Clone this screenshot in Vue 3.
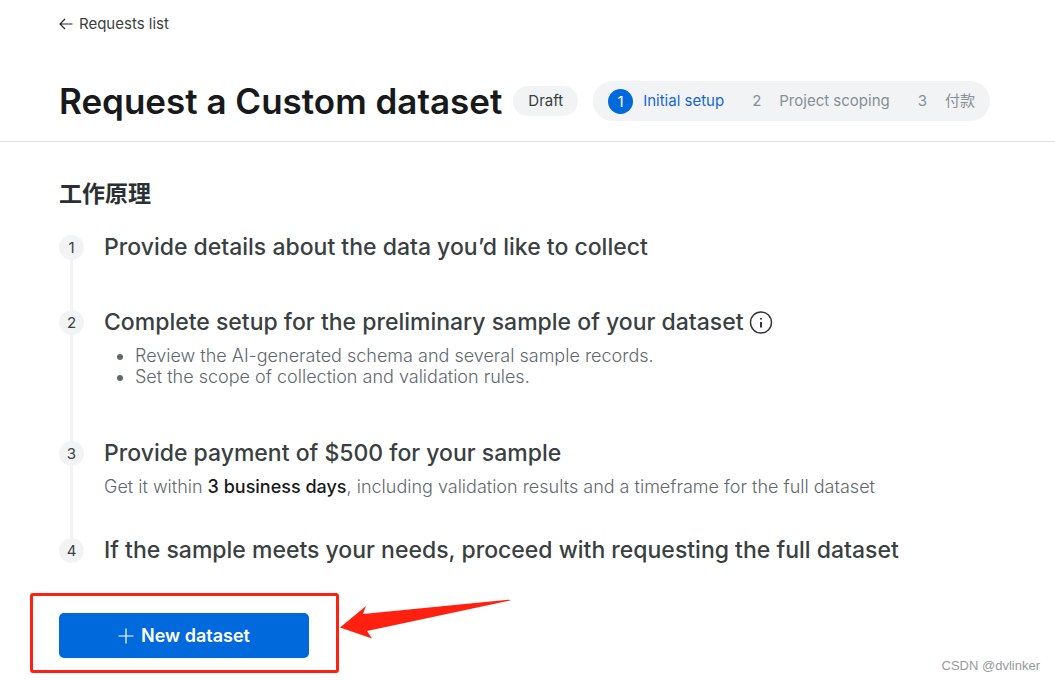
<script setup>
const stages = [
  { id: 1, label: 'Initial setup', active: true },
  { id: 2, label: 'Project scoping', active: false },
  { id: 3, label: '付款', active: false },
]
</script>

<template>
  <div class="page">
    <header class="header">
      <a class="back" href="#">
        <svg width="14" height="14" viewBox="0 0 14 14" aria-hidden="true">
          <path d="M13.5 7H1M6 2L1 7l5 5" />
        </svg>
        <span>Requests list</span>
      </a>
      <div class="title-row">
        <h1>Request a Custom dataset</h1>
        <span class="badge">Draft</span>
        <ol class="stages">
          <li v-for="s in stages" :key="s.id" :class="{ active: s.active }">
            <span class="stage-number">{{ s.id }}</span>
            <span>{{ s.label }}</span>
          </li>
        </ol>
      </div>
    </header>

    <main class="content">
      <h2>工作原理</h2>
      <ol class="steps">
        <li class="step">
          <span class="step-number">1</span>
          <div class="step-body short">
            <h3>Provide details about the data you’d like to collect</h3>
          </div>
        </li>
        <li class="step">
          <span class="step-number">2</span>
          <div class="step-body long">
            <h3>
              <span>Complete setup for the preliminary sample of your dataset</span>
              <button class="info" type="button" aria-label="More information">
                <svg width="24" height="24" viewBox="0 0 24 24" aria-hidden="true">
                  <circle cx="12" cy="11.5" r="10.5" />
                  <path d="M12 11v5.500" class="stem" />
                  <path d="M12 7v1.500" class="stem" />
                </svg>
              </button>
            </h3>
            <ul>
              <li>Review the AI-generated schema and several sample records.</li>
              <li>Set the scope of collection and validation rules.</li>
            </ul>
          </div>
        </li>
        <li class="step">
          <span class="step-number">3</span>
          <div class="step-body medium">
            <h3>Provide payment of $500 for your sample</h3>
            <p>Get it within <strong>3 business days</strong>, including validation results and a timeframe for the full dataset</p>
          </div>
        </li>
        <li class="step">
          <span class="step-number">4</span>
          <div class="step-body">
            <h3>If the sample meets your needs, proceed with requesting the full dataset</h3>
          </div>
        </li>
      </ol>

      <div class="action">
        <button class="new" type="button">
          <svg width="16" height="16" viewBox="0 0 16 16" aria-hidden="true">
            <path d="M8 .5v15M.5 8h15" />
          </svg>
          <span>New dataset</span>
        </button>
        <span class="frame"></span>
        <svg class="arrow" width="172" height="40" viewBox="0 0 172 40" aria-hidden="true">
          <path d="M0 28.500L26 7l-3 8L168 .8q3-.3 2 .8L27 32l5 7.500z" />
        </svg>
      </div>
    </main>
    <footer class="credit">CSDN @dvlinker</footer>
  </div>
</template>

<style>
body {
  margin: 0;
  background: #fff;
}
</style>

<style scoped>
.page {
  position: relative;
  min-height: 100vh;
  box-sizing: border-box;
  font-family: Inter, "Noto Sans CJK SC", sans-serif;
  font-weight: 300;
  color: #3a3f42;
}
h1, h2, h3, p, ol, ul {
  margin: 0;
  padding: 0;
}
ol {
  list-style: none;
}
button {
  font: inherit;
  border: 0;
  padding: 0;
  cursor: pointer;
}
svg {
  display: block;
  fill: none;
}
.header {
  padding: 14px 59px 20px;
  border-bottom: 1px solid #dcdfe1;
}
.back {
  display: inline-flex;
  align-items: center;
  gap: 6px;
  height: 20px;
  font-size: 15px;
  font-weight: 400;
  line-height: 20px;
  color: #3a3f42;
  text-decoration: none;
  vertical-align: top;
}
.back svg {
  stroke: #25292b;
  stroke-width: 1.2;
}
.title-row {
  display: flex;
  align-items: center;
  margin-top: 47px;
  white-space: nowrap;
}
h1 {
  font-size: 35px;
  line-height: 40px;
  font-weight: 600;
  color: #17191a;
}
.badge {
  margin: 0 15px 0 11px;
  padding: 0 15px;
  border-radius: 15px;
  background: #f1f3f5;
  font-size: 15px;
  font-weight: 400;
  line-height: 30px;
}
.stages {
  display: flex;
  gap: 28px;
  padding: 0 15px;
  border-radius: 20px;
  background: #f1f3f5;
  font-size: 15px;
  font-weight: 400;
  line-height: 40px;
  color: #878f95;
}
.stages li {
  display: flex;
  align-items: center;
  gap: 18px;
}
.stages .active {
  gap: 10px;
  color: #1565d8;
}
.active .stage-number {
  width: 25px;
  border-radius: 50%;
  background: #0069dc;
  color: #fff;
  line-height: 25px;
  text-align: center;
}
.content {
  padding: 36px 59px 22px;
}
h2 {
  font-size: 23px;
  line-height: 32px;
  font-weight: 700;
  color: #2b3033;
}
.steps {
  margin-top: 25px;
}
.step {
  position: relative;
  display: flex;
  align-items: flex-start;
  gap: 20px;
}
.step:not(:last-child)::before {
  content: "";
  position: absolute;
  left: 11px;
  top: 0;
  bottom: 0;
  width: 3px;
  background: #f1f3f5;
}
.step-number {
  position: relative;
  flex: none;
  width: 25px;
  border-radius: 50%;
  background: #f1f3f5;
  font-size: 15px;
  font-weight: 400;
  line-height: 25px;
  text-align: center;
}
.short {
  padding-bottom: 50px;
}
.long {
  padding-bottom: 54px;
}
.medium {
  padding-bottom: 40px;
}
h3 {
  display: flex;
  align-items: center;
  gap: 5px;
  font-size: 23px;
  line-height: 25px;
  font-weight: 500;
}
.info {
  background: none;
}
.info svg {
  stroke: #303436;
  stroke-width: 1.4;
}
.info .stem {
  stroke-width: 2;
}
.step-body ul {
  margin-top: 10px;
  padding-left: 31px;
  list-style: disc;
  font-size: 18px;
  line-height: 21px;
  color: #60686e;
}
.step-body p {
  margin-top: 10px;
  font-size: 18px;
  line-height: 22px;
  color: #60686e;
}
strong {
  font-weight: 500;
  color: #17191a;
}
.action {
  position: relative;
  width: 250px;
  margin-top: 50px;
}
.new {
  display: flex;
  align-items: center;
  justify-content: center;
  gap: 7px;
  width: 100%;
  height: 45px;
  border-radius: 5px;
  background: #0069dc;
  color: #fff;
  font-size: 18px;
  font-weight: 600;
}
.new svg {
  stroke: #fff;
  stroke-width: 1.2;
}
.frame {
  position: absolute;
  inset: -20px -30px -15px -29px;
  border: 3px solid #ff2010;
  border-radius: 3px;
  pointer-events: none;
}
.arrow {
  position: absolute;
  left: 281px;
  top: -14px;
  fill: #ff2010;
}
.credit {
  position: absolute;
  right: 15px;
  bottom: 5px;
  font-family: "Liberation Sans", Arial, sans-serif;
  font-size: 13px;
  font-weight: 400;
  line-height: 18px;
  color: #96999b;
}
</style>
